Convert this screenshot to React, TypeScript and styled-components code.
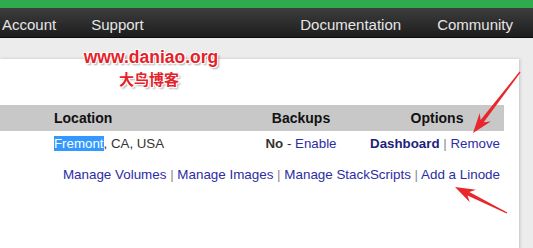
import React from "react";
import styled, { createGlobalStyle } from "styled-components";

const Global = createGlobalStyle`
  html, body { margin: 0; padding: 0; }
  body { width: 533px; height: 248px; overflow: hidden; font-family: "Liberation Sans", Arial, sans-serif; }
`;

const Page = styled.div`
  position: relative;
  width: 533px;
  height: 248px;
  overflow: hidden;
  background: #ececec;
`;

const GreenBar = styled.div`
  height: 8px;
  background: #2faa4c;
`;

const NavBar = styled.div`
  height: 29px;
  display: flex;
  align-items: center;
  background: linear-gradient(#3d3d3d, #1d1d1d);
  border-bottom: 1px solid #0c0c0c;
  color: #e6e6e6;
  font-size: 15px;
`;

const NavGroup = styled.div<{ $right?: boolean }>`
  display: flex;
  gap: ${(p) => (p.$right ? "36px" : "35px")};
  margin-left: ${(p) => (p.$right ? "auto" : "2px")};
  padding-right: ${(p) => (p.$right ? "20px" : "0")};
`;

const NavItem = styled.span`
  line-height: 29px;
  padding-top: 3px;
`;

const Band = styled.div`
  height: 21px;
`;

const Panel = styled.div`
  width: 519px;
  height: 200px;
  background: #fff;
  box-shadow: 1px 0 3px rgba(0, 0, 0, 0.18);
  padding-top: 46px;
  box-sizing: border-box;
  color: #333;
`;

const Grid = styled.div<{ $head?: boolean }>`
  width: 504px;
  display: grid;
  grid-template-columns: 232px 138px 134px;
  align-items: center;
  height: ${(p) => (p.$head ? "26px" : "25px")};
  background: ${(p) => (p.$head ? "#c8c8c8" : "transparent")};
  font-size: ${(p) => (p.$head ? "14px" : "13.3px")};
  font-weight: ${(p) => (p.$head ? "bold" : "normal")};
  color: ${(p) => (p.$head ? "#111" : "#333")};
`;

const Cell = styled.div<{ $first?: boolean; $inset?: number }>`
  text-align: ${(p) => (p.$first ? "left" : "center")};
  padding-left: ${(p) => (p.$first ? "54px" : "0")};
  padding-right: ${(p) => (p.$inset ? `${p.$inset}px` : "0")};
  white-space: nowrap;
`;

const Selected = styled.span`
  background: #3399ff;
  color: #fff;
`;

const Strong = styled.b`
  color: #333;
`;

const Link = styled.span<{ $bold?: boolean; $dark?: boolean }>`
  color: ${(p) => (p.$dark ? "#1e1e7c" : "#2c2ca4")};
  font-weight: ${(p) => (p.$bold ? "bold" : "normal")};
`;

const Sep = styled.span`
  color: #8a8a8a;
`;

const LinksRow = styled.div`
  margin-top: 12px;
  line-height: 14px;
  font-size: 13.4px;
  text-align: right;
  padding-right: 19px;
  white-space: nowrap;
`;

const Watermark = styled.div`
  position: absolute;
  left: 76px;
  top: 47px;
  width: 150px;
  display: flex;
  flex-direction: column;
  align-items: center;
  color: #e5222a;
  font-weight: bold;
  text-shadow: 1px 1px 0 #fff, -1px -1px 0 #fff, 1px -1px 0 #fff, -1px 1px 0 #fff,
    2px 2px 2px rgba(0, 0, 0, 0.35);
`;

const WmLine = styled.span<{ $cjk?: boolean }>`
  font-family: ${(p) =>
    p.$cjk
      ? '"Noto Sans CJK SC", sans-serif'
      : '"Liberation Sans", Arial, sans-serif'};
  font-size: ${(p) => (p.$cjk ? "15px" : "17.5px")};
  line-height: ${(p) => (p.$cjk ? "19px" : "20px")};
  margin-left: ${(p) => (p.$cjk ? "-4px" : "0")};
  margin-top: ${(p) => (p.$cjk ? "2px" : "0")};
`;

const Overlay = styled.svg`
  position: absolute;
  left: 0;
  top: 0;
  pointer-events: none;
`;

function arrowPoints(tx: number, ty: number, hx: number, hy: number) {
  const dx = hx - tx;
  const dy = hy - ty;
  const len = Math.hypot(dx, dy);
  const ux = dx / len;
  const uy = dy / len;
  const px = -uy;
  const py = ux;
  const headLen = 20;
  const headW = 7;
  const notch = 5;
  const bx = hx - ux * headLen;
  const by = hy - uy * headLen;
  const nx = hx - ux * (headLen - notch);
  const ny = hy - uy * (headLen - notch);
  const pts: [number, number][] = [
    [hx, hy],
    [bx + px * headW, by + py * headW],
    [nx + px * 2, ny + py * 2],
    [tx + px * 0.6, ty + py * 0.6],
    [tx - px * 0.6, ty - py * 0.6],
    [nx - px * 2, ny - py * 2],
    [bx - px * headW, by - py * headW],
  ];
  return pts.map((p) => p.map((v) => v.toFixed(1)).join(",")).join(" ");
}

export default function App() {
  return (
    <>
      <Global />
      <Page>
        <GreenBar />
        <NavBar>
          <NavGroup>
            <NavItem>Account</NavItem>
            <NavItem>Support</NavItem>
          </NavGroup>
          <NavGroup $right>
            <NavItem>Documentation</NavItem>
            <NavItem>Community</NavItem>
          </NavGroup>
        </NavBar>
        <Band />
        <Panel>
          <Grid $head>
            <Cell $first>Location</Cell>
            <Cell>Backups</Cell>
            <Cell>Options</Cell>
          </Grid>
          <Grid>
            <Cell $first>
              <Selected>Fremont</Selected>, CA, USA
            </Cell>
            <Cell>
              <Strong>No</Strong> - <Link>Enable</Link>
            </Cell>
            <Cell $inset={4}>
              <Link $bold $dark>
                Dashboard
              </Link>{" "}
              <Sep>|</Sep> <Link>Remove</Link>
            </Cell>
          </Grid>
          <LinksRow>
            <Link>Manage Volumes</Link> <Sep>|</Sep> <Link>Manage Images</Link>{" "}
            <Sep>|</Sep> <Link>Manage StackScripts</Link> <Sep>|</Sep>{" "}
            <Link>Add a Linode</Link>
          </LinksRow>
        </Panel>
        <Watermark>
          <WmLine>www.daniao.org</WmLine>
          <WmLine $cjk>大鸟博客</WmLine>
        </Watermark>
        <Overlay width={533} height={248} viewBox="0 0 533 248">
          <polygon points={arrowPoints(520, 72, 473, 133)} fill="#e8262b" />
          <polygon points={arrowPoints(507, 213, 455, 187)} fill="#e8262b" />
        </Overlay>
      </Page>
    </>
  );
}
